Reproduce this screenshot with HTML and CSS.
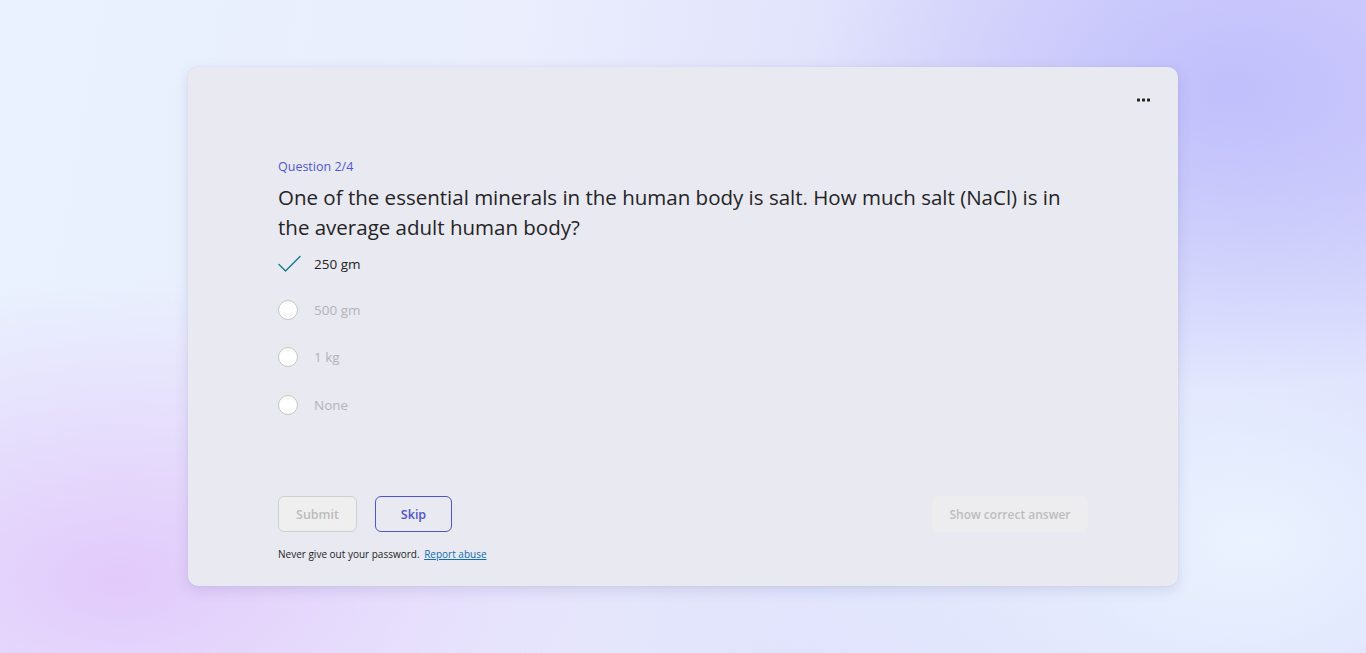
FILE: index.html
```html
<!DOCTYPE html>
<html lang="en">
<head>
<meta charset="utf-8">
<title>Quiz</title>
<link rel="stylesheet" href="styles.css">
</head>
<body>
<div class="page">
  <main class="card">
    <div class="toolbar">
      <button class="more" aria-label="More options">
        <svg width="14" height="4" viewBox="0 0 14 4"><rect x="0" y="0.5" width="3" height="3" rx="0.5" fill="#242424"/><rect x="5" y="0.5" width="3" height="3" rx="0.5" fill="#242424"/><rect x="10" y="0.5" width="3" height="3" rx="0.5" fill="#242424"/></svg>
      </button>
    </div>
    <div class="label">Question 2/4</div>
    <h1 class="question">One of the essential minerals in the human body is salt. How much salt (NaCl) is in the average adult human body?</h1>
    <ul class="options">
      <li class="option selected">
        <span class="mark"><svg width="24" height="20" viewBox="0 0 24 20"><path d="M1 10.5 L7.5 17 L22 2.5" fill="none" stroke="#167b84" stroke-width="1.4" stroke-linecap="round" stroke-linejoin="round"/></svg></span>
        <span class="text">250 gm</span>
      </li>
      <li class="option"><span class="mark"><span class="radio"></span></span><span class="text">500 gm</span></li>
      <li class="option"><span class="mark"><span class="radio"></span></span><span class="text">1 kg</span></li>
      <li class="option"><span class="mark"><span class="radio"></span></span><span class="text">None</span></li>
    </ul>
    <div class="actions">
      <div class="left">
        <button class="btn submit" disabled>Submit</button>
        <button class="btn skip">Skip</button>
      </div>
      <button class="btn show" disabled>Show correct answer</button>
    </div>
    <p class="footer">Never give out your password. <a href="#">Report abuse</a></p>
  </main>
</div>
</body>
</html>
```
FILE: styles.css
```css
* { box-sizing: border-box; }
html, body { margin: 0; padding: 0; height: 100%; }
body {
  font-family: "Open Sans", "Noto Sans", sans-serif;
  color: #242424;
  background:
    radial-gradient(ellipse 420px 300px at 1230px 90px, rgba(192,190,252,0.95), rgba(192,190,252,0) 100%),
    radial-gradient(ellipse 520px 300px at 120px 580px, rgba(226,202,251,1), rgba(226,202,251,0) 100%),
    radial-gradient(ellipse 600px 420px at 1250px 540px, rgba(234,243,255,1), rgba(234,243,255,0) 100%),
    linear-gradient(100deg, #e9f2fe 0%, #eaeefd 35%, #dcdcfb 70%, #d1cffb 100%);
  overflow: hidden;
}
.page {
  width: 1366px;
  height: 653px;
  padding-top: 67px;
  display: flex;
  justify-content: center;
  align-items: flex-start;
}
.card {
  width: 990px;
  height: 519px;
  background: #e9e9f1;
  border-radius: 10px;
  box-shadow: 0 4px 14px rgba(80, 80, 140, 0.16), 0 0 2px rgba(80,80,140,0.1);
  padding: 17px 90px 0 90px;
  display: flex;
  flex-direction: column;
}
.toolbar {
  display: flex;
  justify-content: flex-end;
  margin-right: -72px;
  height: 32px;
}
.more {
  width: 32px;
  height: 32px;
  border: none;
  background: transparent;
  padding: 0;
  display: flex;
  align-items: center;
  justify-content: center;
}
.label {
  margin-top: 42px;
  font-size: 12.5px;
  line-height: 18px;
  color: #5255dc;
}
.question {
  margin: 6px 0 0 0;
  font-size: 20.5px;
  line-height: 30px;
  font-weight: 400;
  color: #242424;
  max-width: 800px;
}
.options {
  list-style: none;
  margin: 0;
  padding: 0;
}
.option {
  height: 47.5px;
  display: flex;
  align-items: center;
  font-size: 13.5px;
  color: #b3b3b8;
}
.option.selected { color: #242424; height: 44px; }
.mark {
  width: 36px;
  display: flex;
  align-items: center;
}
.radio {
  width: 20px;
  height: 20px;
  border-radius: 50%;
  border: 1px solid #c4c4c8;
  background: #fff;
}
.actions {
  margin-top: 67px;
  display: flex;
  justify-content: space-between;
  align-items: center;
}
.left { display: flex; gap: 18px; }
.btn {
  height: 36px;
  border-radius: 6px;
  font-family: inherit;
  font-size: 12.5px;
  font-weight: 600;
  line-height: 1;
  padding: 3px 0 0 0;
}
.submit {
  width: 79px;
  background: #efeff0;
  border: 1px solid #cfcfd3;
  color: #bcbcbc;
}
.skip {
  width: 77px;
  background: transparent;
  border: 1px solid #5155cc;
  color: #4f52cf;
}
.show {
  width: 156px;
  background: #ededf0;
  border: none;
  color: #bcbcbc;
  font-size: 12px;
}
.footer {
  margin: 14px 0 0 0;
  font-size: 10px;
  line-height: 16px;
  color: #242424;
}
.footer a {
  color: #0f6cbd;
  margin-left: 2px;
}
```
